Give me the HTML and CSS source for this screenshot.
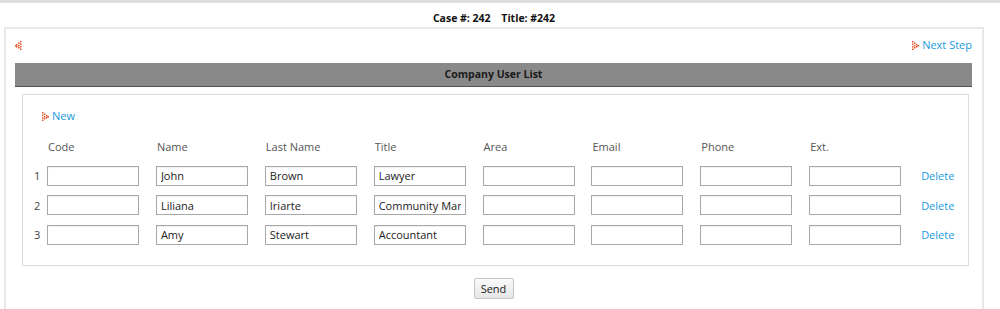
FILE: index.html
```html
<!DOCTYPE html>
<html lang="en">
<head>
    <meta charset="UTF-8">
    <meta name="viewport" content="width=device-width, initial-scale=1.0">
    <title>Company User List</title>
    <link rel="stylesheet" href="styles.css">
</head>
<body>
    <div class="case-title">
        <span>Case #: 242</span>
        <span>Title: #242</span>
    </div>
    <div class="panel">
        <div class="nav-row">
            <a class="back-link" href="#">
                <svg width="7" height="9" viewBox="0 0 7 9"><rect x="5" y="0" width="1.5" height="1.5"/><rect x="5" y="2.5" width="1.5" height="1.5"/><rect x="5" y="5" width="1.5" height="1.5"/><rect x="5" y="7.5" width="1.5" height="1.5"/><rect x="3" y="1.5" width="1.5" height="1.5"/><rect x="3" y="4" width="1.5" height="1.5"/><rect x="3" y="6" width="1.5" height="1.5"/><rect x="1" y="3" width="1.5" height="1.5"/><rect x="1" y="5" width="1.5" height="1.5"/><rect x="0" y="4" width="1.5" height="1.5"/></svg>
            </a>
            <a class="link" href="#">
                <svg width="7" height="9" viewBox="0 0 7 9"><rect x="0" y="0" width="1.5" height="1.5"/><rect x="0" y="2.5" width="1.5" height="1.5"/><rect x="0" y="5" width="1.5" height="1.5"/><rect x="0" y="7.5" width="1.5" height="1.5"/><rect x="2" y="1.5" width="1.5" height="1.5"/><rect x="2" y="4" width="1.5" height="1.5"/><rect x="2" y="6" width="1.5" height="1.5"/><rect x="4" y="3" width="1.5" height="1.5"/><rect x="4" y="5" width="1.5" height="1.5"/><rect x="5.5" y="4" width="1.5" height="1.5"/></svg>
                Next Step
            </a>
        </div>
        <div class="list-header">Company User List</div>
        <div class="list-box">
            <a class="link new-link" href="#">
                <svg width="7" height="9" viewBox="0 0 7 9"><rect x="0" y="0" width="1.5" height="1.5"/><rect x="0" y="2.5" width="1.5" height="1.5"/><rect x="0" y="5" width="1.5" height="1.5"/><rect x="0" y="7.5" width="1.5" height="1.5"/><rect x="2" y="1.5" width="1.5" height="1.5"/><rect x="2" y="4" width="1.5" height="1.5"/><rect x="2" y="6" width="1.5" height="1.5"/><rect x="4" y="3" width="1.5" height="1.5"/><rect x="4" y="5" width="1.5" height="1.5"/><rect x="5.5" y="4" width="1.5" height="1.5"/></svg>
                New
            </a>
            <div class="user-grid">
                <span></span>
                <span class="col-head">Code</span>
                <span class="col-head">Name</span>
                <span class="col-head">Last Name</span>
                <span class="col-head">Title</span>
                <span class="col-head">Area</span>
                <span class="col-head">Email</span>
                <span class="col-head">Phone</span>
                <span class="col-head">Ext.</span>
                <span></span>

                <span class="row-num">1</span>
                <input type="text">
                <input type="text" value="John">
                <input type="text" value="Brown">
                <input type="text" value="Lawyer">
                <input type="text">
                <input type="text">
                <input type="text">
                <input type="text">
                <a class="link delete-link" href="#">Delete</a>

                <span class="row-num">2</span>
                <input type="text">
                <input type="text" value="Liliana">
                <input type="text" value="Iriarte">
                <input type="text" value="Community Manager">
                <input type="text">
                <input type="text">
                <input type="text">
                <input type="text">
                <a class="link delete-link" href="#">Delete</a>

                <span class="row-num">3</span>
                <input type="text">
                <input type="text" value="Amy">
                <input type="text" value="Stewart">
                <input type="text" value="Accountant">
                <input type="text">
                <input type="text">
                <input type="text">
                <input type="text">
                <a class="link delete-link" href="#">Delete</a>
            </div>
        </div>
        <div class="send-row">
            <button class="send-btn">Send</button>
        </div>
    </div>
</body>
</html>
```

FILE: styles.css
```css
body {
    margin: 0;
    background: #fff;
    font-family: "Open Sans", Arial, sans-serif;
    font-size: 11px;
    color: #333;
}
.case-title {
    border-top: 3px solid #dedede;
    padding: 6px 12px 0 0;
    height: 18px;
    line-height: 18px;
    text-align: center;
    font-size: 10.5px;
    font-weight: bold;
    color: #111;
}
.case-title span {
    margin: 0 4px;
}
.panel {
    margin: 0 16px 0 4px;
    border: 2px solid #e8e8e8;
    border-bottom: none;
    padding: 8px 10px 10px 9px;
    height: 272px;
}
.nav-row {
    display: flex;
    justify-content: space-between;
    align-items: center;
    height: 16px;
    line-height: 16px;
}
.back-link {
    display: flex;
    align-items: center;
    fill: #e4532a;
}
.link {
    color: #1a9be0;
    text-decoration: none;
    display: inline-flex;
    align-items: center;
    gap: 3px;
}
.link svg {
    fill: #e4532a;
}
.list-header {
    margin-top: 10px;
    height: 23px;
    line-height: 23px;
    background: #898989;
    border-bottom: 1px solid #555;
    text-align: center;
    font-size: 10.5px;
    font-weight: bold;
    color: #1a1a1a;
}
.list-box {
    margin: 7px 3px 0 7px;
    border: 1px solid #dcdcdc;
    padding: 13px 0 20px 8px;
}
.new-link {
    margin-left: 11px;
    height: 16px;
    line-height: 16px;
}
.user-grid {
    display: grid;
    grid-template-columns: 16px repeat(8, 108.9px) auto;
    grid-template-rows: 19px;
    grid-auto-rows: 20px;
    row-gap: 9.5px;
    margin-top: 13px;
    align-items: center;
}
.user-grid .col-head {
    color: #555;
    padding-left: 1px;
    margin-bottom: 1px;
}
.row-num {
    padding-left: 3px;
    color: #444;
}
.user-grid input {
    box-sizing: border-box;
    width: 92px;
    height: 20px;
    border: 1px solid #a8a8a8;
    box-shadow: inset 0 1px 1px rgba(0, 0, 0, 0.06);
    padding: 0 4px;
    font-family: "Open Sans", Arial, sans-serif;
    font-size: 11px;
    color: #222;
    outline: none;
}
.delete-link {
    padding-left: 3px;
}
.send-row {
    margin-top: 12px;
    text-align: center;
}
.send-btn {
    width: 40px;
    height: 21px;
    padding: 0;
    border: 1px solid #c6c6c6;
    border-radius: 2px;
    background: linear-gradient(#fafafa, #e6e6e6);
    font-family: "Open Sans", Arial, sans-serif;
    font-size: 11px;
    color: #222;
}
```
